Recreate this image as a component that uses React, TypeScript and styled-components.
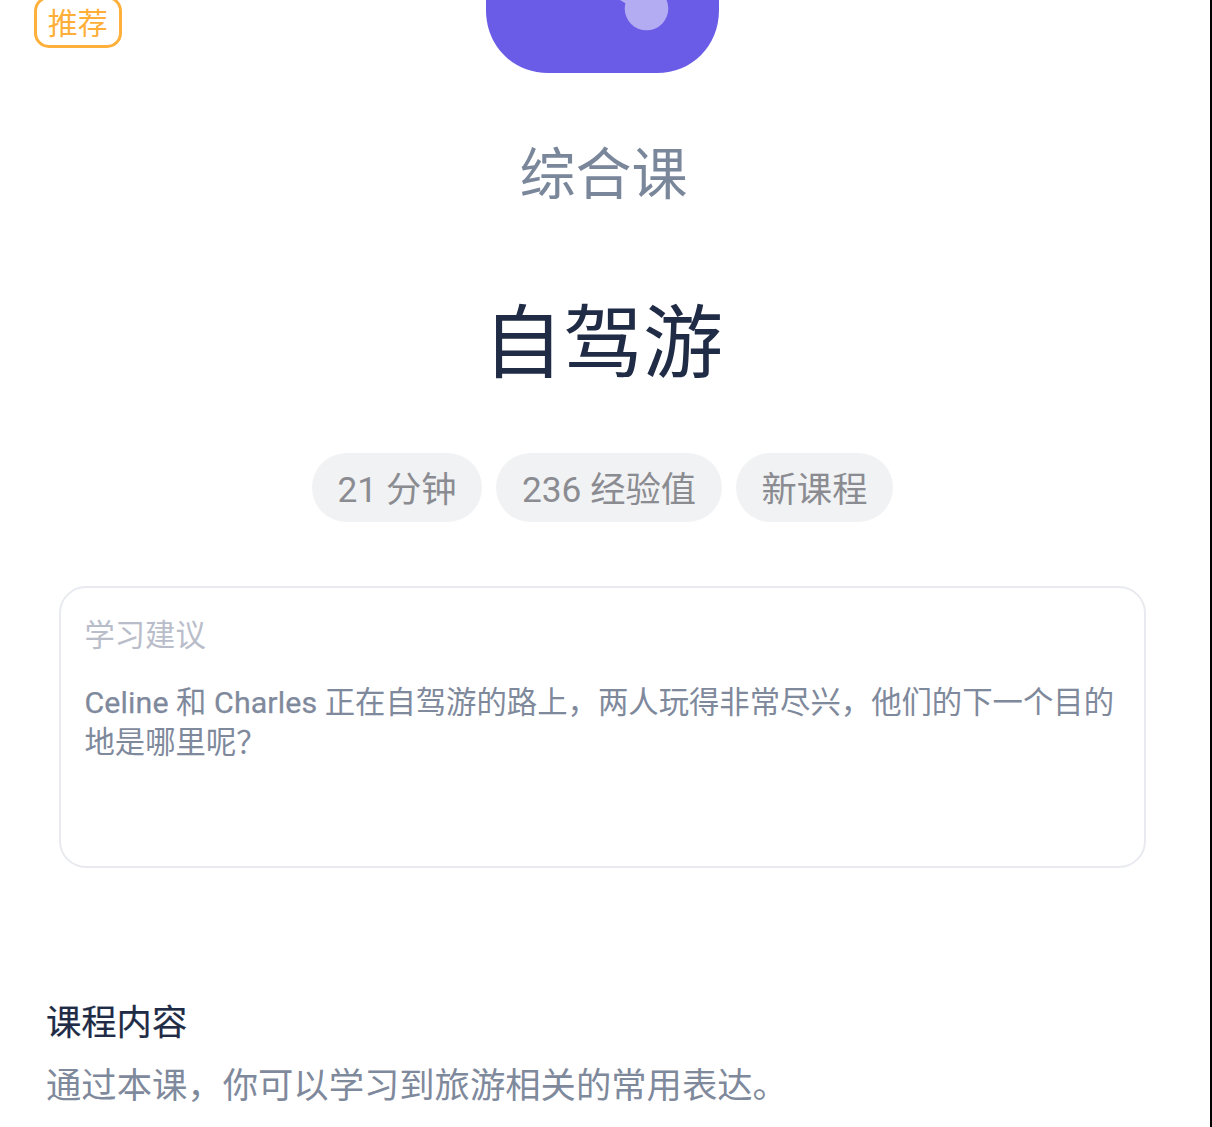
import React from 'react';
import styled, { createGlobalStyle } from 'styled-components';

const Global = createGlobalStyle`
  * { box-sizing: border-box; }
  body { margin: 0; background: #fff; overflow: hidden; }
`;
const Page = styled.main`
  position: relative;
  width: 1212px;
  height: 1127px;
  overflow: hidden;
  background: #fff;
  border-right: 2px solid #000;
  font-family: Roboto, "Noto Sans CJK SC", sans-serif;
`;
const Badge = styled.span`
  position: absolute;
  left: 34px;
  top: -4px;
  width: 87.5px;
  height: 52px;
  border: 3px solid #ffb03b;
  border-radius: 15px;
  color: #ffaf38;
  font-size: 30px;
  line-height: 50px;
  text-align: center;
`;
const Hero = styled.header`
  display: flex;
  flex-direction: column;
  align-items: center;
  width: 1205px;
`;
const LessonIcon = styled.svg`
  display: block;
  width: 234px;
  height: 74px;
`;
const Kind = styled.div`
  margin: 59px 0 0 2px;
  height: 84px;
  line-height: 84px;
  font-size: 56px;
  color: #7a869a;
`;
const Title = styled.h1`
  margin: 67px 0 0 1px;
  height: 120px;
  line-height: 120px;
  font-size: 80px;
  font-weight: 400;
  color: #202b45;
`;
const Tags = styled.div`
  display: flex;
  gap: 14px;
  margin-top: 49px;
`;
const Tag = styled.span<{ $w: number }>`
  width: ${p => p.$w}px;
  height: 69px;
  border-radius: 35px;
  background: #f1f2f4;
  color: #8b8c91;
  font-size: 35.3px;
  line-height: 75px;
  text-align: center;
  white-space: nowrap;
`;
const Advice = styled.section`
  width: 1087px;
  height: 282px;
  margin: 64px 0 0 59px;
  padding: 23px 23.5px;
  border: 2px solid #e8eaf0;
  border-radius: 27px;
`;
const AdviceTitle = styled.div`
  height: 48px;
  line-height: 50px;
  font-size: 30.3px;
  color: #b9bdca;
`;
const AdviceText = styled.p`
  margin: 24px 0 0;
  font-size: 30.37px;
  line-height: 40.4px;
  color: #7f899c;
  white-space: nowrap;
`;
const Name = styled.span`
  letter-spacing: 0.1px;
  -webkit-text-stroke: 0.25px currentColor;
`;
const Content = styled.section`
  margin: 129px 0 0 46px;
`;
const ContentTitle = styled.h2`
  margin: 0;
  height: 52px;
  line-height: 52px;
  font-size: 35.3px;
  font-weight: 400;
  color: #202b45;
  -webkit-text-stroke: 0.2px currentColor;
`;
const ContentText = styled.p`
  margin: 11px 0 0;
  line-height: 52px;
  font-size: 35.35px;
  color: #7f899c;
`;

export default function App() {
  return (
    <Page>
      <Global />
      <Badge>推荐</Badge>
      <Hero>
        <LessonIcon viewBox="0 0 234 74">
          <path d="M0 0H233V10C233 46 206 73 171 73H62C27 73 0 46 0 10Z" fill="#6a5ce6" />
          <path d="M134 0H150V5L139 3Z" fill="#b4acf2" />
          <circle cx="160.5" cy="8.5" r="21.8" fill="#b4acf2" />
        </LessonIcon>
        <Kind>综合课</Kind>
        <Title>自驾游</Title>
        <Tags>
          <Tag $w={170}>21 分钟</Tag>
          <Tag $w={226}>236 经验值</Tag>
          <Tag $w={157}>新课程</Tag>
        </Tags>
      </Hero>
      <Advice>
        <AdviceTitle>学习建议</AdviceTitle>
        <AdviceText>
          <Name>Celine</Name> 和 <Name>Charles</Name> 正在自驾游的路上，两人玩得非常尽兴，他们的下一个目的
          <br />
          地是哪里呢？
        </AdviceText>
      </Advice>
      <Content>
        <ContentTitle>课程内容</ContentTitle>
        <ContentText>通过本课，你可以学习到旅游相关的常用表达。</ContentText>
      </Content>
    </Page>
  );
}
